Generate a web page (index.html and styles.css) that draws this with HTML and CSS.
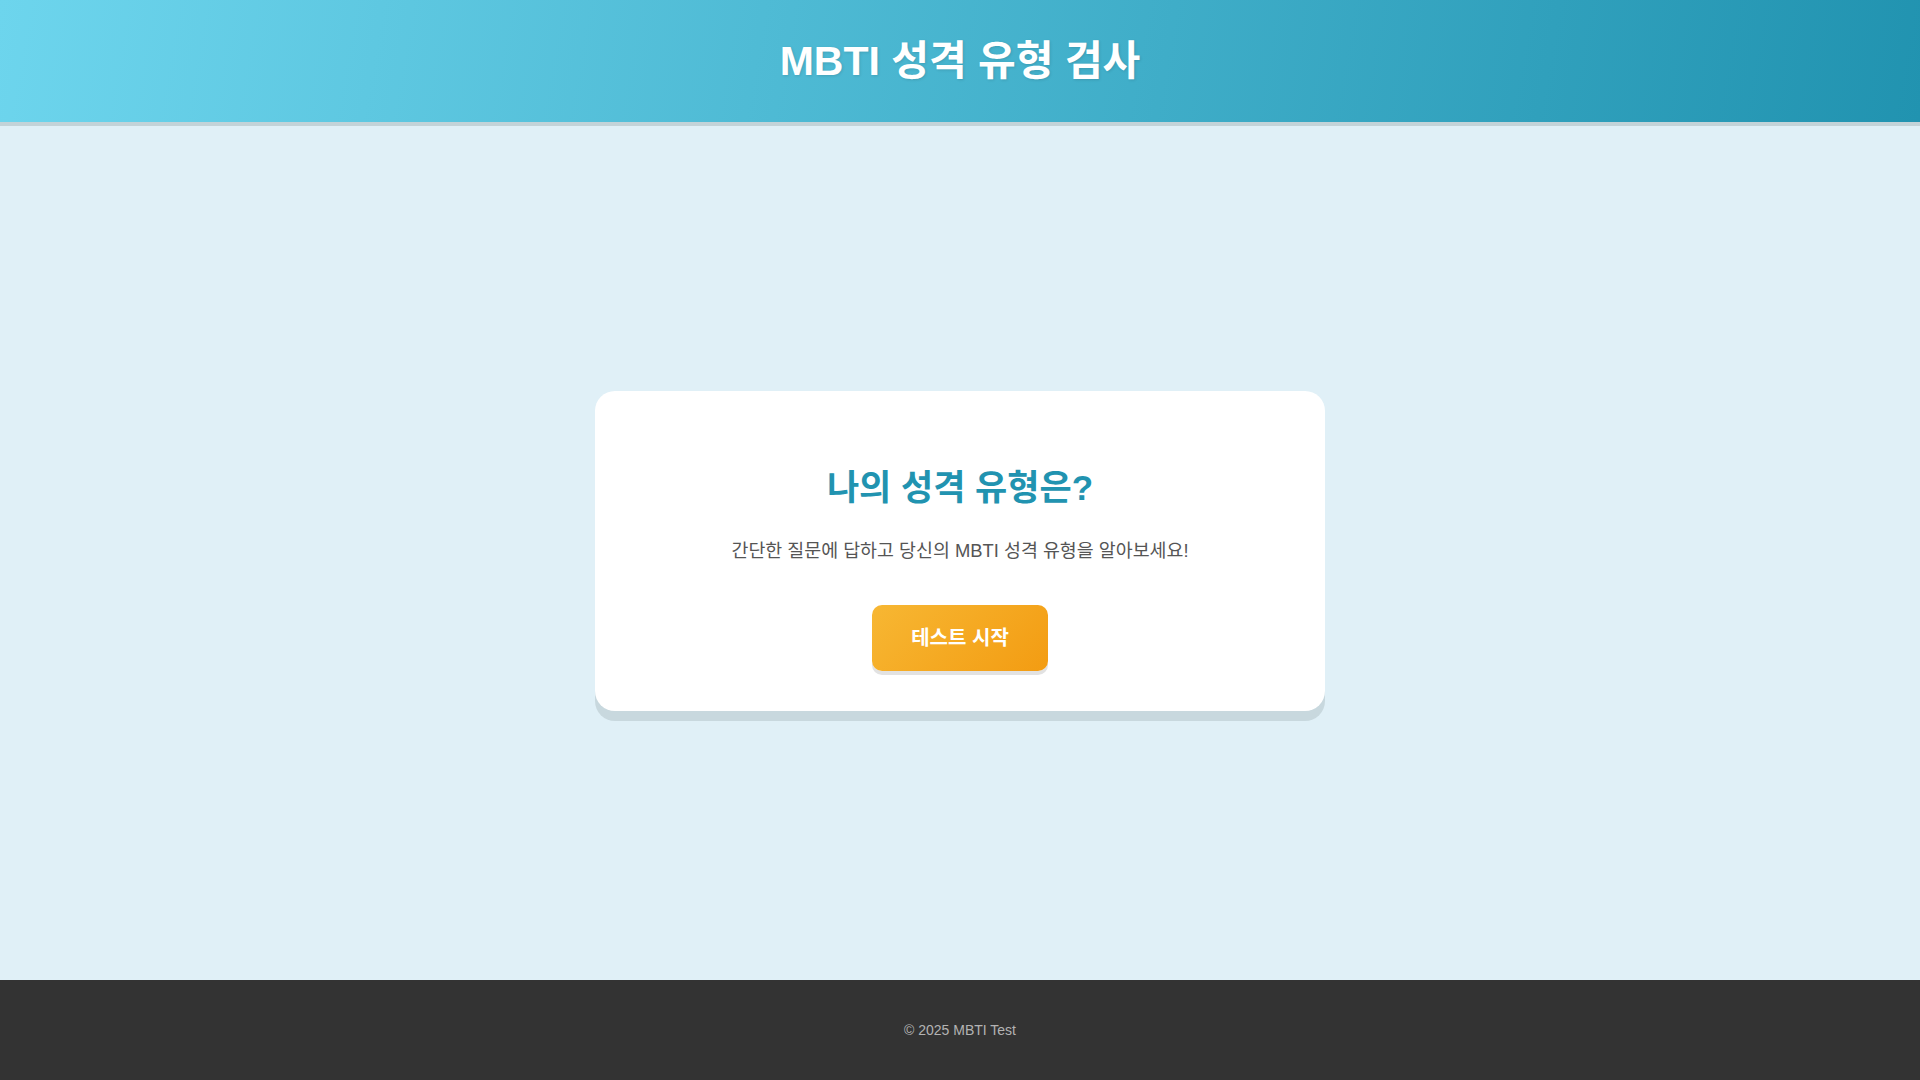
FILE: index.html
```html
<!DOCTYPE html>
<html lang="ko">
<head>
    <meta charset="utf-8">
    <title>MBTI 성격 유형 검사</title>
    <link rel="stylesheet" href="styles.css">
</head>
<body>
    <header class="site-header">
        <h1>MBTI 성격 유형 검사</h1>
    </header>
    <main class="main">
        <div class="card">
            <h2>나의 성격 유형은?</h2>
            <p class="intro">간단한 질문에 답하고 당신의 MBTI 성격 유형을 알아보세요!</p>
            <button type="button" class="start-btn">테스트 시작</button>
        </div>
    </main>
    <footer class="site-footer">
        <p>&copy; 2025 MBTI Test</p>
    </footer>
</body>
</html>
```

FILE: styles.css
```css
body {
    font-family: "Liberation Sans", Arial, "Noto Sans CJK KR", sans-serif;
    background-color: #e0f0f7;
    margin: 0;
    min-height: 100vh;
    display: flex;
    flex-direction: column;
}
.site-header {
    background: linear-gradient(100deg, #6dd5ed 0%, #2193b0 100%);
    border-bottom: 4px solid #c3d3d8;
    padding: 37px 0;
    text-align: center;
}
.site-header h1 {
    margin: 0;
    color: #fff;
    font-size: 41px;
    line-height: 48px;
    font-weight: bold;
    text-shadow: 1px 1px 3px rgba(0, 0, 0, 0.12);
}
.main {
    flex: 1;
    display: flex;
    justify-content: center;
    align-items: center;
}
.card {
    width: 730px;
    box-sizing: border-box;
    background-color: #fff;
    border-radius: 20px;
    box-shadow: 0 10px 0 #c8d8de;
    padding: 40px;
    text-align: center;
    margin-top: -4px;
}
.card h2 {
    margin: 36px 0 28px;
    color: #2193b0;
    font-size: 35px;
    line-height: 42px;
}
.intro {
    margin: 0 0 40px;
    color: #555;
    font-size: 18.4px;
    line-height: 28px;
}
.start-btn {
    font-family: inherit;
    background: linear-gradient(135deg, #f7b733 0%, #f39c12 100%);
    color: #fff;
    font-size: 20px;
    font-weight: bold;
    line-height: 26px;
    padding: 20px 39px;
    border: none;
    border-radius: 10px;
    box-shadow: 0 4px 0 #e2e2e2;
    cursor: pointer;
}
.start-btn:hover {
    background: linear-gradient(135deg, #f5ad22 0%, #ee930a 100%);
}
.site-footer {
    background-color: #333;
    height: 100px;
    display: flex;
    align-items: center;
    justify-content: center;
}
.site-footer p {
    margin: 0;
    color: #b3b3b3;
    font-size: 14px;
}
```
